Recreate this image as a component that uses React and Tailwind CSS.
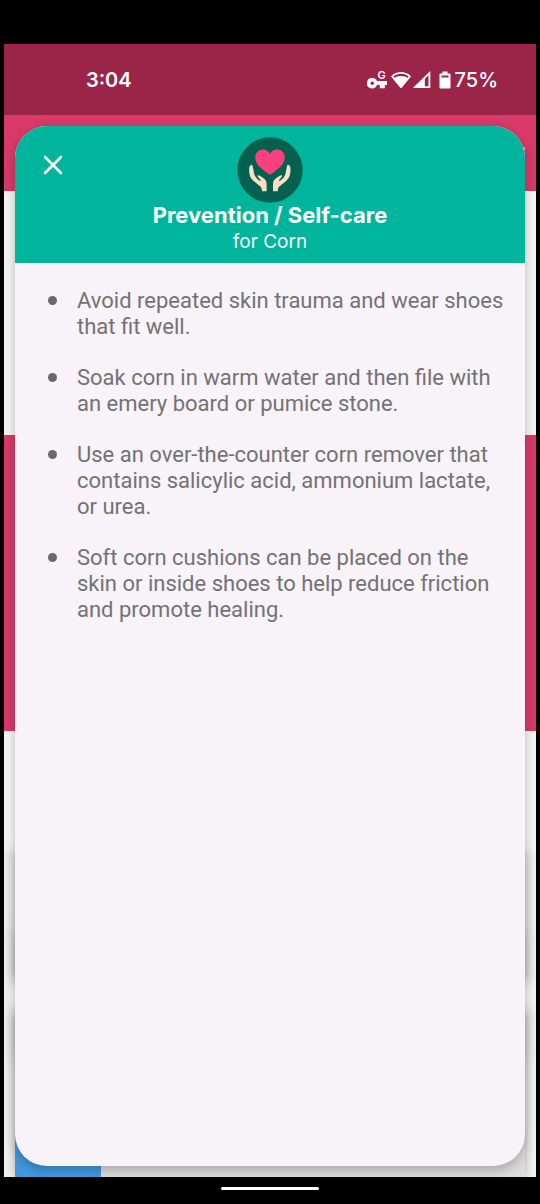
const tips = [
  "Avoid repeated skin trauma and wear shoes that fit well.",
  "Soak corn in warm water and then file with an emery board or pumice stone.",
  "Use an over-the-counter corn remover that contains salicylic acid, ammonium lactate, or urea.",
  "Soft corn cushions can be placed on the skin or inside shoes to help reduce friction and promote healing.",
];

function VpnIcon() {
  return (
    <svg viewBox="0 0 20 28" className="h-7 w-5" fill="#fff" aria-hidden="true">
      <path
        fillRule="evenodd"
        d="M5.200 12a5.200 5.200 0 1 0 4.800 7h2.800v3.200h5V19h2.200v-3.900H10A5.200 5.200 0 0 0 5.200 12Zm0 3.400a1.800 1.800 0 1 1 0 3.600 1.800 1.800 0 0 1 0-3.600Z"
      />
      <text x="14.500" y="12.500" fontSize="11" fontWeight="600" textAnchor="middle" fontFamily="Inter, sans-serif">
        G
      </text>
    </svg>
  );
}

function WifiIcon() {
  return (
    <svg viewBox="0 0 20 18" className="h-[18px] w-5" aria-hidden="true">
      <path
        d="M10 16.300 1.200 5.400C3.700 3.100 6.600 1.900 10 1.900s6.300 1.200 8.800 3.500Z"
        fill="none"
        stroke="#fff"
        strokeWidth="1.800"
        strokeLinejoin="round"
      />
      <path d="M10 17 2.400 7.600C4.800 5.900 7.200 5.100 10 5.100s5.200.8 7.600 2.500Z" fill="#fff" />
    </svg>
  );
}

function SignalIcon() {
  return (
    <svg viewBox="0 0 18 18" className="h-[18px] w-[18px]" aria-hidden="true">
      <path d="M2 16.200 16.400 2.200v14Z" fill="none" stroke="#fff" strokeWidth="1.800" />
      <path d="M1 17 11.800 6v11Z" fill="#fff" />
    </svg>
  );
}

function BatteryIcon() {
  return (
    <svg viewBox="0 0 12 18" className="h-[18px] w-3" aria-hidden="true">
      <path d="M3.500.5h5v2h2a1 1 0 0 1 1 1V16.500a1 1 0 0 1-1 1H1.500a1 1 0 0 1-1-1V3.500a1 1 0 0 1 1-1h2Z" fill="#fff" />
      <path d="M2.500 4.500h7v2h-7Z" fill="#9b2449" />
    </svg>
  );
}

function CareIcon() {
  const hand =
    "M94 104c-4 1-6 6-6 13 0 9 1 18 5 25 7 11 22 20 29 27 3 3 4 8 4 13h14v-20c0-7-1-11-5-15-5-5-11-10-17-12-4-1-6 1-4 4l8 10c1 2-1 3-3 2-8-6-14-13-16-21-2-7-2-14-4-21-1-4-3-6-5-5Z";
  return (
    <svg viewBox="52 21 196 196" className="h-[66px] w-[66px]" aria-hidden="true">
      <circle cx="150" cy="119" r="97" fill="#04604f" />
      <path
        d="M150 134C137 123 106 107 106 82c0-14 10-24 23-24 9 0 17 5 21 13 4-8 12-13 21-13 13 0 23 10 23 24 0 25-31 41-44 52Z"
        fill="#fb4080"
      />
      <path d={hand} fill="#f9dfc4" />
      <path d={hand} fill="#f9dfc4" transform="translate(299 0) scale(-1 1)" />
    </svg>
  );
}

function StatusBar() {
  return (
    <div className="flex h-[71px] items-center justify-between bg-[#9b2449] pr-[38px] pl-[82px] text-[20px] font-semibold text-white">
      <time>3:04</time>
      <div className="flex items-center">
        <VpnIcon />
        <span className="ml-1 flex">
          <WifiIcon />
        </span>
        <span className="ml-0.5 flex">
          <SignalIcon />
        </span>
        <span className="ml-2 flex">
          <BatteryIcon />
        </span>
        <span className="ml-1 font-medium">75%</span>
      </div>
    </div>
  );
}

function Backdrop() {
  return (
    <div className="flex flex-col overflow-hidden bg-[#f3f2f3] [grid-area:1/1]" aria-hidden="true">
      <div className="flex h-[76px] items-start justify-end bg-[#d93a6a] pt-8 pr-[11px]">
        <span className="h-1 w-1 rounded-full bg-[#d5e5e5]" />
      </div>
      <div className="h-[244px] bg-[#f7f6f7]" />
      <div className="h-[296px] bg-[#d93a6a]" />
      <div className="h-[120px] bg-[#f7f6f7]" />
      <div className="flex flex-1 flex-col px-[11px]">
        <div className="h-[80px] shadow-[0_0_12px_rgba(0,0,0,0.25)]" />
        <div className="h-[50px] shadow-[0_0_12px_rgba(0,0,0,0.4)]" />
        <div className="h-[30px]" />
        <div className="h-[50px] shadow-[0_0_12px_rgba(0,0,0,0.4)]" />
        <div className="flex flex-1 shadow-[0_0_10px_rgba(0,0,0,0.3)]">
          <div className="w-[86px] bg-[#4398e0]" />
          <div className="flex-1 bg-[#dddbdc]" />
        </div>
      </div>
    </div>
  );
}

function CareSheet() {
  return (
    <section
      role="dialog"
      aria-labelledby="sheet-title"
      className="m-[11px] overflow-hidden rounded-[32px] bg-[#f7f3f8] shadow-[0_4px_12px_rgba(0,0,0,0.25)] [grid-area:1/1]"
    >
      <header className="grid grid-cols-[76px_1fr_76px] items-start bg-[#00b59c] pt-[11px] pb-1.5 text-white">
        <button type="button" aria-label="Close" className="flex h-14 items-center justify-center">
          <svg viewBox="0 0 20 20" className="h-5 w-5" fill="none" stroke="#fff" strokeWidth="2.600" strokeLinecap="round">
            <path d="M2 2 18 18M18 2 2 18" />
          </svg>
        </button>
        <div className="flex flex-col items-center">
          <CareIcon />
          <h1 id="sheet-title" className="text-[22px] leading-6 font-bold whitespace-nowrap">
            Prevention / Self-care
          </h1>
          <p className="text-[19px] leading-[30px]">for Corn</p>
        </div>
      </header>
      <ul className="flex flex-col gap-[25px] pt-[25px] pr-4 pl-[33px] font-[Roboto,sans-serif] text-[22px] leading-[26px] text-[#747175]">
        {tips.map((tip) => (
          <li key={tip} className="flex gap-5">
            <span className="mt-2 h-[9px] w-[9px] shrink-0 rounded-full bg-[#6b686c]" />
            <span>{tip}</span>
          </li>
        ))}
      </ul>
    </section>
  );
}

export default function App() {
  return (
    <div className="flex min-h-screen flex-col bg-black px-1 pt-11 font-[Inter,sans-serif]">
      <StatusBar />
      <main className="grid flex-1 grid-cols-1">
        <Backdrop />
        <CareSheet />
      </main>
      <div className="flex h-[27px] items-start justify-center pt-2.5">
        <div className="h-[3px] w-[98px] rounded-full bg-white" />
      </div>
    </div>
  );
}
